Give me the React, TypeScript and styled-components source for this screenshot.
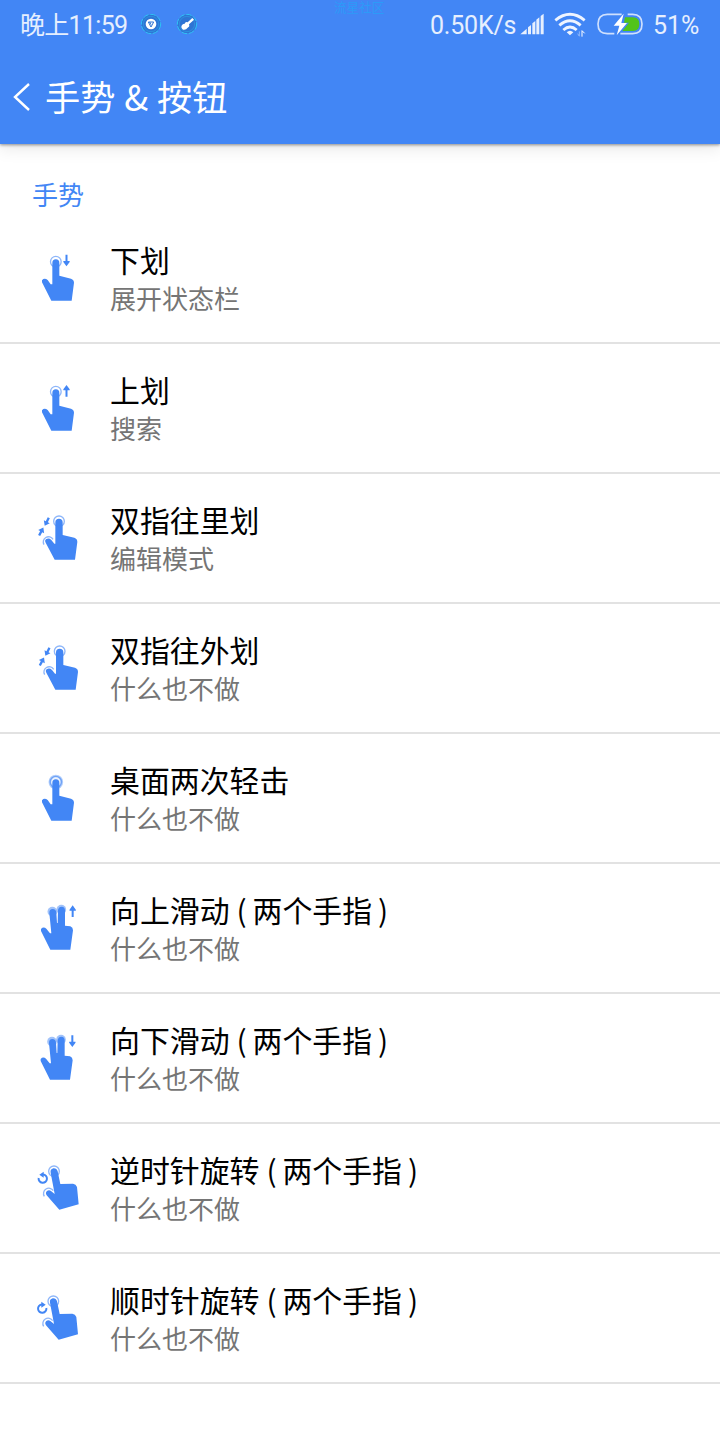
import React from 'react';
import styled, { createGlobalStyle } from 'styled-components';

const BLUE = '#4286f5';

const GlobalStyle = createGlobalStyle`
  * { box-sizing: border-box; }
  body {
    margin: 0;
    background: #fff;
    font-family: 'Noto Sans CJK SC', sans-serif;
  }
`;

const Screen = styled.div`
  width: 720px;
  height: 1440px;
  overflow: hidden;
  background: #fff;
`;

const TopArea = styled.header`
  position: relative;
  height: 144px;
  background: ${BLUE};
  box-shadow: 0 1px 3px rgba(0, 0, 0, 0.42), 0 4px 16px rgba(0, 0, 0, 0.1);
`;

const Watermark = styled.span`
  position: absolute;
  left: 334px;
  top: 0;
  font-size: 12.6px;
  line-height: 13px;
  color: #2c9bf8;
  white-space: nowrap;
`;

const StatusBar = styled.div`
  display: flex;
  justify-content: space-between;
  height: 50px;
  padding: 0 20px;
  color: #e6effe;
`;

const StatusGroup = styled.div`
  display: flex;
  align-items: center;
`;

const StatusText = styled.span`
  padding-top: 2px;
  font-family: Roboto, 'Noto Sans CJK SC', sans-serif;
  font-size: 25px;
  line-height: 48px;
  white-space: nowrap;
`;

const Clock = styled(StatusText)`
  width: 120px;
  letter-spacing: -0.7px;
`;

const Speed = styled(StatusText)`
  width: 91px;
  margin-left: 1px;
  margin-right: -1px;
  letter-spacing: -0.2px;
`;

const Percent = styled(StatusText)`
  width: 47px;
`;

const StatusSvg = styled.svg<{ $gap?: number }>`
  display: block;
  flex: none;
  margin-right: ${(p) => p.$gap ?? 0}px;
`;

const TitleBar = styled.div`
  display: flex;
  align-items: center;
  height: 94px;
  padding-left: 12px;
  color: #fff;
`;

const PageTitle = styled.h1`
  margin: 0 0 2px 12px;
  font-size: 35.2px;
  font-weight: 400;
  line-height: 92px;
  word-spacing: 1px;
`;

const SectionTitle = styled.h2`
  height: 70px;
  margin: 0;
  padding: 32px 0 0 32px;
  font-size: 26px;
  font-weight: 400;
  line-height: 36px;
  color: ${BLUE};
`;

const Row = styled.div`
  display: flex;
  height: 130px;
  border-bottom: 2px solid #e2e2e2;
`;

const RowIcon = styled.svg`
  display: block;
  flex: none;
  width: 80px;
  height: 80px;
  margin: 26px 10px 0 20px;
  fill: ${BLUE};
`;

const RowText = styled.div`
  padding-top: 25px;
`;

const RowTitle = styled.div`
  display: flex;
  font-size: 29.9px;
  line-height: 40px;
  color: #000;
`;

const Note = styled.span`
  margin-left: 7px;
  white-space: nowrap;
`;

const Paren = styled.span<{ $close?: boolean }>`
  display: inline-block;
  width: 16px;
  text-align: ${(p) => (p.$close ? 'right' : 'left')};
`;

const RowValue = styled.div`
  font-size: 26px;
  line-height: 37px;
  color: #757575;
`;

type Kind = 'down' | 'up' | 'pinch' | 'spread' | 'double' | 'twoUp' | 'twoDown' | 'ccw' | 'cw';

const ringStroke = { fill: 'none', stroke: BLUE, strokeOpacity: 0.6, strokeWidth: 4 };

const Ring = ({ x, y, r = 16 }: { x: number; y: number; r?: number }) => (
  <circle cx={x} cy={y} r={r} {...ringStroke} />
);

const Arrow = ({ x, y, angle = 0 }: { x: number; y: number; angle?: number }) => (
  <path
    transform={`translate(${x} ${y}) rotate(${angle})`}
    d="M0-18L9.500-5V-2H3V17H-3V-2H-9.500V-5Z"
  />
);

const ShortArrow = ({ x, y, angle }: { x: number; y: number; angle: number }) => (
  <path
    transform={`translate(${x} ${y}) rotate(${angle})`}
    d="M0-13L10 1H3.500V14H-3.500V1H-10Z"
  />
);

const Hand = () => (
  <path d="M97 69Q97 58 107.500 58Q118 58 118 69V107L153 116Q162 119 162 128L155 182H94L66 127Q64 120 70 117Q77 115 83 120L92 133H97Z" />
);

const PinchHand = () => (
  <g>
    <path d="M106 67Q106 56 117 56Q128 56 128 67V105L163 113Q172 116 172 126L165 179H104L77 128Q73 121 79 117Q87 113 94 120L103 131H106Z" />
    <Ring x={117} y={64} />
    <path d="M72 134A15.500 15.500 0 1 1 99 118" {...ringStroke} />
    <ShortArrow x={80} y={66} angle={207} />
    <ShortArrow x={64} y={94} angle={28} />
  </g>
);

const TwoFingerHand = () => (
  <g>
    <circle cx={97} cy={65} r={14.500} fillOpacity={0.5} />
    <circle cx={124} cy={59} r={14.500} fillOpacity={0.5} />
    <path d="M88 69Q88 57 98 57Q108 57 109 68L111 99H113L114 60Q116 50 125 50Q135 51 135 61V107L151 109Q159 112 159 121L151 179H91L63 123Q61 116 67 113Q74 111 79 116L90 130H94Z" />
  </g>
);

const RotateHand = () => (
  <g>
    <path d="M92 68Q90 58 100 55Q110 54 113 64L121 102L159 101Q168 102 171 111L176 163L118 179L80 136Q75 128 81 123Q87 119 93 123L104 132Z" />
    <Ring x={102} y={64} />
    <path d="M73 139A15.500 15.500 0 1 1 100 122" {...ringStroke} />
  </g>
);

const Turn = () => (
  <g>
    <path d="M56 84A12.500 12.500 0 1 0 69 73.500" fill="none" stroke={BLUE} strokeWidth={6} />
    <path d="M58 74L71 65V83Z" />
  </g>
);

const GestureIcon = ({ kind }: { kind: Kind }) => (
  <RowIcon viewBox="0 0 240 240">
    {(kind === 'down' || kind === 'up') && (
      <g>
        <Hand />
        <Ring x={107.5} y={65} />
        <Arrow x={139.5} y={kind === 'up' ? 63 : 61} angle={kind === 'up' ? 0 : 180} />
      </g>
    )}
    {kind === 'double' && (
      <g>
        <circle cx={107.5} cy={66} r={22} fillOpacity={0.4} />
        <circle cx={107.5} cy={66} r={14} fill="#fff" fillOpacity={0.75} />
        <Ring x={107.5} y={66} r={17} />
        <Hand />
      </g>
    )}
    {kind === 'pinch' && <PinchHand />}
    {kind === 'spread' && (
      <g transform="translate(2 0)">
        <PinchHand />
      </g>
    )}
    {kind === 'twoUp' && (
      <g>
        <TwoFingerHand />
        <Arrow x={158} y={64} />
      </g>
    )}
    {kind === 'twoDown' && (
      <g transform="translate(-1 0)">
        <TwoFingerHand />
        <Arrow x={158} y={63} angle={180} />
      </g>
    )}
    {kind === 'ccw' && (
      <g>
        <RotateHand />
        <Turn />
      </g>
    )}
    {kind === 'cw' && (
      <g transform="translate(-2 0)">
        <RotateHand />
        <g transform="translate(137 0) scale(-1 1)">
          <Turn />
        </g>
      </g>
    )}
  </RowIcon>
);

const gestures: { kind: Kind; title: string; note?: string; value: string }[] = [
  { kind: 'down', title: '下划', value: '展开状态栏' },
  { kind: 'up', title: '上划', value: '搜索' },
  { kind: 'pinch', title: '双指往里划', value: '编辑模式' },
  { kind: 'spread', title: '双指往外划', value: '什么也不做' },
  { kind: 'double', title: '桌面两次轻击', value: '什么也不做' },
  { kind: 'twoUp', title: '向上滑动', note: '两个手指', value: '什么也不做' },
  { kind: 'twoDown', title: '向下滑动', note: '两个手指', value: '什么也不做' },
  { kind: 'ccw', title: '逆时针旋转', note: '两个手指', value: '什么也不做' },
  { kind: 'cw', title: '顺时针旋转', note: '两个手指', value: '什么也不做' },
];

const AppBadge = ({ children, gap }: { children: React.ReactNode; gap?: number }) => (
  <StatusSvg width="22" height="22" viewBox="0 3 66 66" $gap={gap}>
    <circle cx="33" cy="33" r="29" fill="#2f74d4" stroke="#2fc4f5" strokeWidth="3" strokeDasharray="18 4" />
    <circle cx="33" cy="33" r="23" fill="none" stroke="#2a9fe6" strokeWidth="2" />
    {children}
  </StatusSvg>
);

const SignalIcon = () => (
  <StatusSvg width="24" height="24" viewBox="0 0 72 72" fill="#e6effe" $gap={10}>
    <path d="M1 64L20 47V64ZM24 43L33 36V64H24ZM37 31L46 24V64H37ZM49 20L58 13V64H49ZM62 9L71 2V64H62Z" />
  </StatusSvg>
);

const WifiIcon = () => (
  <StatusSvg width="32" height="26" viewBox="0 0 96 78" $gap={11}>
    <g fill="none" stroke="#eef4ff" strokeWidth="8.500">
      <path d="M4 25Q48-11 92 25" />
      <path d="M16 40Q48 12 80 40" />
      <path d="M28 54Q48 36 68 54" />
    </g>
    <path d="M38 61Q48 52 58 61L48 70Z" fill="#eef4ff" />
    <path d="M76 58V72M71 65L76 73" stroke="#8fb7fa" strokeWidth="3" fill="none" />
    <path d="M84 74V56L92 64" stroke="#fff" strokeWidth="3" fill="none" />
  </StatusSvg>
);

const BatteryIcon = () => (
  <StatusSvg width="46" height="26" viewBox="0 3 138 78" $gap={10}>
    <path d="M84 19H108Q127 19 127 39Q127 60 108 60H76L96 35H81Z" fill="#52c41a" />
    <path
      d="M74 10H31Q3 10 3 39Q3 68 31 68H52M92 10H107Q135 10 135 39Q135 68 107 68H70"
      fill="none"
      stroke="#cfe0fd"
      strokeWidth="5"
    />
    <path d="M80 8L50 44H67L59 73L90 36H73Z" fill="#fff" />
  </StatusSvg>
);

export default function App() {
  return (
    <Screen>
      <GlobalStyle />
      <TopArea>
        <Watermark>流星社区</Watermark>
        <StatusBar>
          <StatusGroup>
            <Clock>晚上11:59</Clock>
            <AppBadge gap={14}>
              <circle cx="33" cy="33" r="16" fill="#fff" />
              <path d="M25 27H41M25 27L33 42L41 27M29 27L33 35" fill="none" stroke="#2f74d4" strokeWidth="3" />
            </AppBadge>
            <AppBadge>
              <path d="M49 15L54 20L39 34Q42 42 35 44Q30 52 21 50Q13 44 18 36Q22 32 26 32Q28 25 35 28Z" fill="#fff" />
            </AppBadge>
          </StatusGroup>
          <StatusGroup>
            <Speed>0.50K/s</Speed>
            <SignalIcon />
            <WifiIcon />
            <BatteryIcon />
            <Percent>51%</Percent>
          </StatusGroup>
        </StatusBar>
        <TitleBar>
          <StatusSvg width="21" height="32" viewBox="0 0 21 32">
            <path d="M17 3L3 16L17 29" fill="none" stroke="#fff" strokeWidth="2.4" />
          </StatusSvg>
          <PageTitle>手势 &amp; 按钮</PageTitle>
        </TitleBar>
      </TopArea>
      <SectionTitle>手势</SectionTitle>
      {gestures.map((g) => (
        <Row key={g.kind}>
          <GestureIcon kind={g.kind} />
          <RowText>
            <RowTitle>
              {g.title}
              {g.note && (
                <Note>
                  <Paren>(</Paren>
                  {g.note}
                  <Paren $close>)</Paren>
                </Note>
              )}
            </RowTitle>
            <RowValue>{g.value}</RowValue>
          </RowText>
        </Row>
      ))}
    </Screen>
  );
}
